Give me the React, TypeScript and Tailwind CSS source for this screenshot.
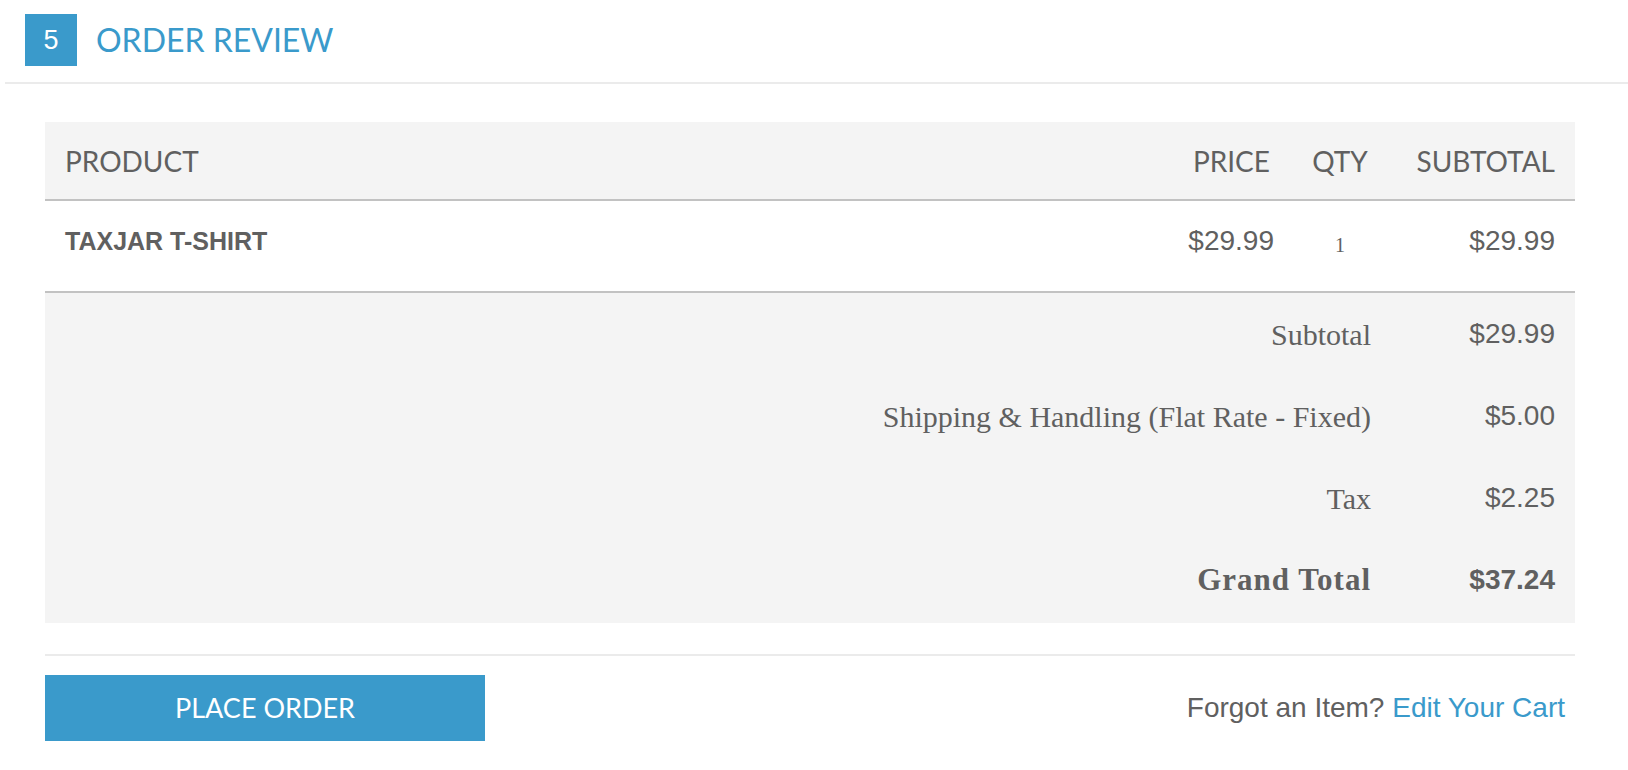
import React from "react";

export default function App() {
  const totals: [string, string, boolean][] = [
    ["Subtotal", "$29.99", false],
    ["Shipping & Handling (Flat Rate - Fixed)", "$5.00", false],
    ["Tax", "$2.25", false],
    ["Grand Total", "$37.24", true],
  ];
  return (
    <div className="w-[1628px] h-[770px] bg-white text-[#606060]">
      {/* Header */}
      <div className="pt-[14px] pl-[25px] flex items-center gap-[19px] font-['Lato',sans-serif]">
        <div className="w-[52px] h-[52px] bg-[#3a9acb] text-white flex items-center justify-center text-[27px] font-['Liberation_Sans',sans-serif]">
          5
        </div>
        <div className="text-[#3a9acb] text-[32px] font-normal leading-none">ORDER REVIEW</div>
      </div>
      <div className="ml-[5px] mt-[16px] h-[2px] bg-[#ebebeb]"></div>

      {/* Table */}
      <div className="ml-[45px] mt-[38px] w-[1530px]">
        {/* head */}
        <div className="bg-[#f4f4f4] h-[79px] border-b-2 border-[#c2c2c2] grid grid-cols-[1fr_150px_100px_165px] items-center px-[20px] text-[28px] font-['Lato',sans-serif]">
          <div>PRODUCT</div>
          <div className="text-right pr-[20px]">PRICE</div>
          <div className="text-center">QTY</div>
          <div className="text-right">SUBTOTAL</div>
        </div>
        {/* body */}
        <div className="h-[92px] border-b-2 border-[#c2c2c2] grid grid-cols-[1fr_150px_100px_165px] items-start pt-[25px] px-[20px] font-['Liberation_Sans',sans-serif]">
          <div className="text-[25px] font-bold leading-[30px]">TAXJAR T-SHIRT</div>
          <div className="text-right pr-[16px] text-[28px] leading-[30px]">$29.99</div>
          <div className="text-center text-[20px] leading-[30px] pt-[4px] font-['Liberation_Serif',serif]">1</div>
          <div className="text-right text-[28px] leading-[30px]">$29.99</div>
        </div>
        {/* totals */}
        <div className="bg-[#f4f4f4] pb-[2px]">
          {totals.map(([label, value, bold]) => (
            <div key={label} className="h-[82px] flex items-center justify-end pr-[20px]">
              <div
                className={`font-['Liberation_Serif',serif] ${
                  bold ? "font-bold text-[31px] tracking-[1px]" : "text-[30px]"
                }`}
              >
                {label}
              </div>
              <div
                className={`w-[184px] text-right font-['Liberation_Sans',sans-serif] text-[28px] ${
                  bold ? "font-bold" : ""
                }`}
              >
                {value}
              </div>
            </div>
          ))}
        </div>

        <div className="mt-[31px] h-[2px] bg-[#ebebeb]"></div>

        <div className="mt-[19px] flex items-center justify-between">
          <button className="w-[440px] h-[66px] bg-[#3a9acb] text-white text-[27px] font-['Lato',sans-serif] flex items-center justify-center">
            PLACE ORDER
          </button>
          <div className="pr-[10px] text-[28px] font-['Liberation_Sans',sans-serif]">
            Forgot an Item? <span className="text-[#3a9acb]">Edit Your Cart</span>
          </div>
        </div>
      </div>
    </div>
  );
}
